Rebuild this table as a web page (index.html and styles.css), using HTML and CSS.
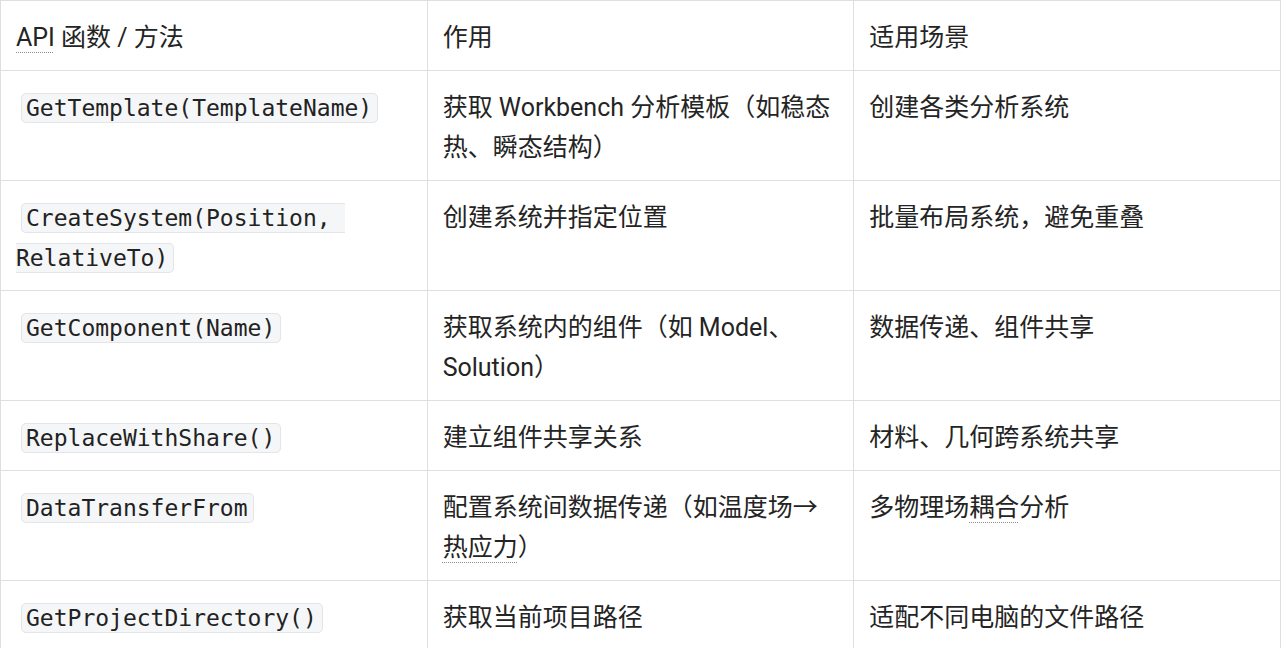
FILE: index.html
```html
<!DOCTYPE html>
<html lang="zh-CN">
<head>
<meta charset="utf-8">
<title>API 表</title>
<link rel="stylesheet" href="styles.css">
</head>
<body>
<table class="api-table">
  <colgroup><col class="col"><col class="col"><col class="col"></colgroup>
  <thead>
    <tr><th><span class="dot">API</span> 函数 / 方法</th><th>作用</th><th>适用场景</th></tr>
  </thead>
  <tbody>
    <tr><td><code>GetTemplate(TemplateName)</code></td><td>获取 Workbench 分析模板（如稳态热、瞬态结构）</td><td>创建各类分析系统</td></tr>
    <tr><td><code>CreateSystem(Position, RelativeTo)</code></td><td>创建系统并指定位置</td><td>批量布局系统，避免重叠</td></tr>
    <tr><td><code>GetComponent(Name)</code></td><td>获取系统内的组件（如 Model、Solution）</td><td>数据传递、组件共享</td></tr>
    <tr><td><code>ReplaceWithShare()</code></td><td>建立组件共享关系</td><td>材料、几何跨系统共享</td></tr>
    <tr><td><code>DataTransferFrom</code></td><td>配置系统间数据传递（如温度场→<span class="dot">热应力</span>）</td><td>多物理场<span class="dot">耦合</span>分析</td></tr>
    <tr><td><code>GetProjectDirectory()</code></td><td>获取当前项目路径</td><td>适配不同电脑的文件路径</td></tr>
  </tbody>
</table>
</body>
</html>
```
FILE: styles.css
```css
html, body {
  margin: 0;
  padding: 0;
  background: #ffffff;
}
body {
  font-family: "Roboto", "Noto Sans CJK SC", sans-serif;
  font-size: 25px;
  color: #242424;
}
.api-table {
  width: 1281px;
  border-collapse: collapse;
  table-layout: fixed;
}
.api-table th,
.api-table td {
  border: 1px solid #dfdfe2;
  padding: 17px 15px 12px;
  line-height: 40px;
  text-align: left;
  vertical-align: top;
  font-weight: normal;
}
code {
  font-family: "DejaVu Sans Mono", monospace;
  font-size: 23px;
  line-height: 26px;
  white-space: pre-wrap;
  background: #f5f6f8;
  border: 1px solid #e3e5e8;
  border-radius: 5px;
  padding: 1px 5px 1px 4px;
  margin-left: 5px;
  color: #222;
}
.dot {
  text-decoration: underline dotted #8c8c8c;
  text-underline-offset: 6px;
  text-decoration-thickness: 1px;
}
```
